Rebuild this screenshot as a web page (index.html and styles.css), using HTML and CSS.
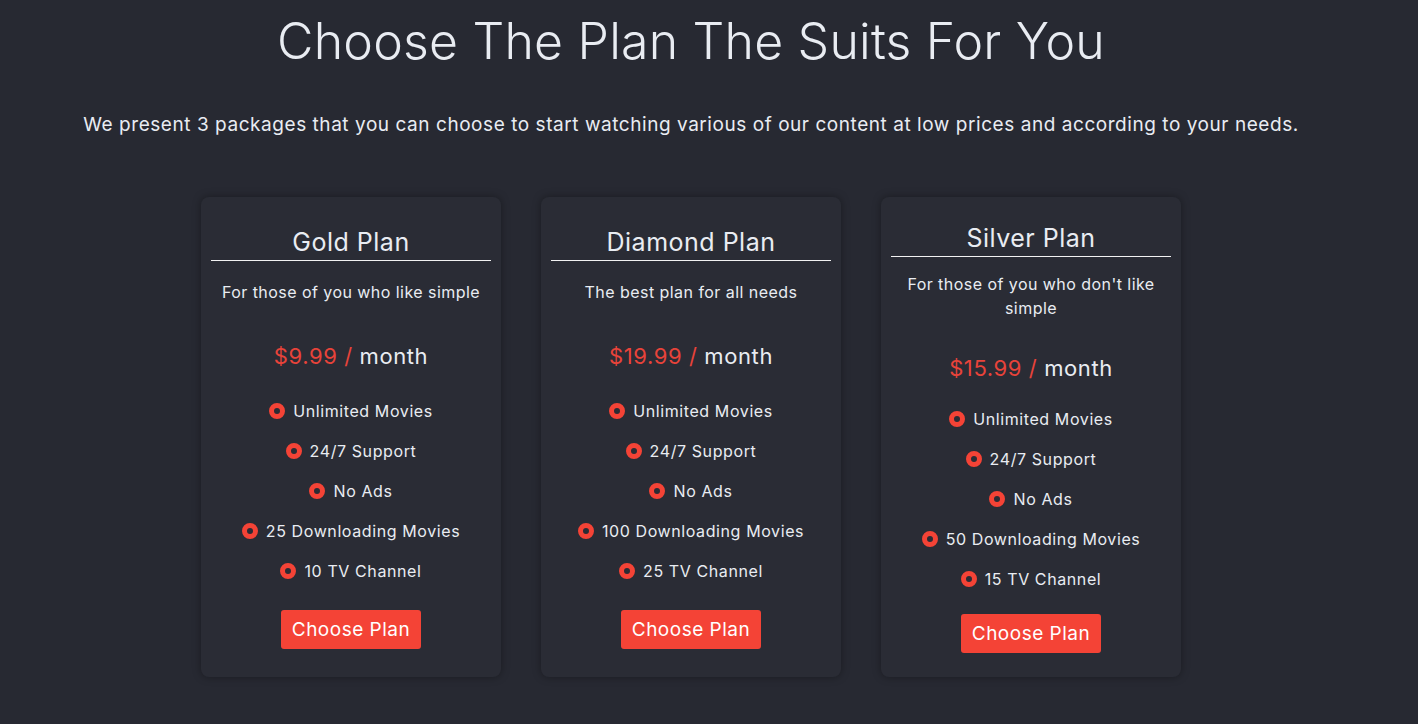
FILE: index.html
```html
<!DOCTYPE html>
<html lang="en">
<head>
<meta charset="utf-8">
<title>Pricing</title>
<link rel="stylesheet" href="styles.css">
</head>
<body>
<main class="page">
  <h1 class="title">Choose The Plan The Suits For You</h1>
  <p class="intro">We present 3 packages that you can choose to start watching various of our content at low prices and according to your needs.</p>
  <section class="plans">
    <article class="card">
      <h2 class="card-title">Gold Plan</h2>
      <p class="card-desc">For those of you who like simple</p>
      <p class="price"><span class="amount">$9.99 /</span> month</p>
      <ul class="features">
        <li><span class="dot"></span>Unlimited Movies</li>
        <li><span class="dot"></span>24/7 Support</li>
        <li><span class="dot"></span>No Ads</li>
        <li><span class="dot"></span>25 Downloading Movies</li>
        <li><span class="dot"></span>10 TV Channel</li>
      </ul>
      <button class="btn">Choose Plan</button>
    </article>
    <article class="card">
      <h2 class="card-title">Diamond Plan</h2>
      <p class="card-desc">The best plan for all needs</p>
      <p class="price"><span class="amount">$19.99 /</span> month</p>
      <ul class="features">
        <li><span class="dot"></span>Unlimited Movies</li>
        <li><span class="dot"></span>24/7 Support</li>
        <li><span class="dot"></span>No Ads</li>
        <li><span class="dot"></span>100 Downloading Movies</li>
        <li><span class="dot"></span>25 TV Channel</li>
      </ul>
      <button class="btn">Choose Plan</button>
    </article>
    <article class="card">
      <h2 class="card-title">Silver Plan</h2>
      <p class="card-desc">For those of you who don't like simple</p>
      <p class="price"><span class="amount">$15.99 /</span> month</p>
      <ul class="features">
        <li><span class="dot"></span>Unlimited Movies</li>
        <li><span class="dot"></span>24/7 Support</li>
        <li><span class="dot"></span>No Ads</li>
        <li><span class="dot"></span>50 Downloading Movies</li>
        <li><span class="dot"></span>15 TV Channel</li>
      </ul>
      <button class="btn">Choose Plan</button>
    </article>
  </section>
</main>
</body>
</html>
```
FILE: styles.css
```css
* { box-sizing: border-box; }
html, body { margin: 0; padding: 0; }
body {
  background: #272932;
  color: #e9ecf2;
  font-family: Inter, "Open Sans", sans-serif;
  height: 724px;
  overflow: hidden;
}
.page {
  width: 1382px;
  padding-top: 11px;
  display: flex;
  flex-direction: column;
  align-items: center;
}
.title {
  margin: 0;
  font-size: 50px;
  line-height: 60px;
  font-weight: 300;
  letter-spacing: 0.2px;
}
.intro {
  margin: 40px 0 0;
  font-size: 19px;
  line-height: 27px;
  font-weight: 400;
  letter-spacing: 0.55px;
}
.plans {
  margin-top: 59px;
  display: flex;
  gap: 40px;
}
.card {
  width: 300px;
  height: 480px;
  background: #2a2c35;
  border-radius: 8px;
  box-shadow: 0 0 8px rgba(0, 0, 0, 0.35);
  padding: 11px 10px 9px;
  display: flex;
  flex-direction: column;
  justify-content: space-evenly;
  align-items: stretch;
  text-align: center;
}
.card-title {
  margin: 0;
  font-size: 25px;
  line-height: 30px;
  font-weight: 400;
  letter-spacing: 0.5px;
  padding-bottom: 3px;
  border-bottom: 1px solid #f2f2f2;
}
.card-desc {
  margin: 0;
  font-size: 16px;
  line-height: 24px;
  letter-spacing: 0.45px;
  padding: 0 4px;
}
.price {
  margin: 18px 0 0;
  font-size: 22px;
  line-height: 30px;
  letter-spacing: 0.6px;
}
.amount { color: #e8433a; }
.features {
  list-style: none;
  margin: 0;
  padding: 0;
}
.features li {
  height: 40px;
  display: flex;
  align-items: center;
  justify-content: center;
  gap: 8px;
  font-size: 16px;
  letter-spacing: 0.6px;
}
.dot {
  width: 16px;
  height: 16px;
  border-radius: 50%;
  border: 5px solid #f44336;
  background: #2a2c35;
  flex: none;
}
.btn {
  align-self: center;
  width: 140px;
  height: 39px;
  border: none;
  border-radius: 3px;
  background: #f44336;
  color: #fff;
  font-family: inherit;
  font-size: 19px;
  letter-spacing: 0.5px;
  cursor: pointer;
}
```
